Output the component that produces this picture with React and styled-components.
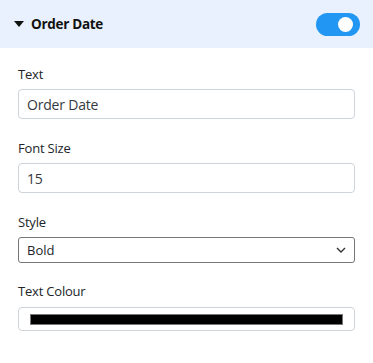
import React from "react";
import styled, { createGlobalStyle } from "styled-components";

const Global = createGlobalStyle`
  html, body { margin: 0; padding: 0; background: #fff; }
  body { font-family: "Open Sans", "Noto Sans", sans-serif; color: #212529; }
  * { box-sizing: border-box; }
`;

const Panel = styled.div`
  width: 373px;
  height: 363px;
  background: #fff;
`;

const Header = styled.div`
  height: 48px;
  background: #e8f1fd;
  display: flex;
  align-items: center;
  padding: 0 13px 0 14px;
`;

const Caret = styled.span`
  width: 0;
  height: 0;
  border-left: 5px solid transparent;
  border-right: 5px solid transparent;
  border-top: 6px solid #111;
  margin-right: 7px;
  margin-top: -1px;
`;

const Title = styled.div`
  font-size: 13.5px;
  font-weight: 700;
  color: #111;
  flex: 1;
  letter-spacing: -0.3px;
`;

const Toggle = styled.div`
  width: 44px;
  height: 23px;
  border-radius: 12px;
  background: #2196f3;
  display: flex;
  align-items: center;
  justify-content: flex-end;
  padding-right: 7px;
`;

const Knob = styled.div`
  width: 15px;
  height: 15px;
  border-radius: 50%;
  background: #fff;
`;

const Body = styled.div`
  padding: 17px 18px 0 18px;
  display: flex;
  flex-direction: column;
  gap: 20px;
`;

const Field = styled.div`
  display: flex;
  flex-direction: column;
  gap: ${(p) => p.$gap || 6}px;
  margin-top: ${(p) => p.$shift || 0}px;
`;

const Label = styled.div`
  font-size: 13px;
  font-weight: 500;
  color: #212529;
  line-height: 18px;
  letter-spacing: -0.2px;
`;

const TextBox = styled.div`
  height: 30px;
  border: 1px solid #ced4da;
  border-radius: 4px;
  display: flex;
  align-items: center;
  padding: 0 8px;
  font-size: 14px;
  letter-spacing: -0.2px;
  color: #343a40;
  width: 337px;
`;

const SelectBox = styled.div`
  height: 26px;
  border: 1px solid #767676;
  border-radius: 3px;
  display: flex;
  align-items: center;
  justify-content: space-between;
  padding: 0 8px 0 8px;
  font-size: 13px;
  color: #212529;
  width: 337px;
`;

const ColorBox = styled.div`
  height: 24px;
  border: 1px solid #ced4da;
  border-radius: 4px;
  display: flex;
  align-items: center;
  padding: 0 11px;
  width: 337px;
`;

const Swatch = styled.div`
  flex: 1;
  height: 11px;
  background: #000;
  border: 1px solid #777;
`;

export default function App() {
  return (
    <Panel>
      <Global />
      <Header>
        <Caret />
        <Title>Order Date</Title>
        <Toggle>
          <Knob />
        </Toggle>
      </Header>
      <Body>
        <Field>
          <Label>Text</Label>
          <TextBox>Order Date</TextBox>
        </Field>
        <Field>
          <Label>Font Size</Label>
          <TextBox>15</TextBox>
        </Field>
        <Field>
          <Label>Style</Label>
          <SelectBox>
            <span>Bold</span>
            <svg width="10" height="6" viewBox="0 0 10 6">
              <path d="M1 1l4 4 4-4" fill="none" stroke="#333" strokeWidth="1.4" />
            </svg>
          </SelectBox>
        </Field>
        <Field $gap={7} $shift={-1}>
          <Label>Text Colour</Label>
          <ColorBox>
            <Swatch />
          </ColorBox>
        </Field>
      </Body>
    </Panel>
  );
}
